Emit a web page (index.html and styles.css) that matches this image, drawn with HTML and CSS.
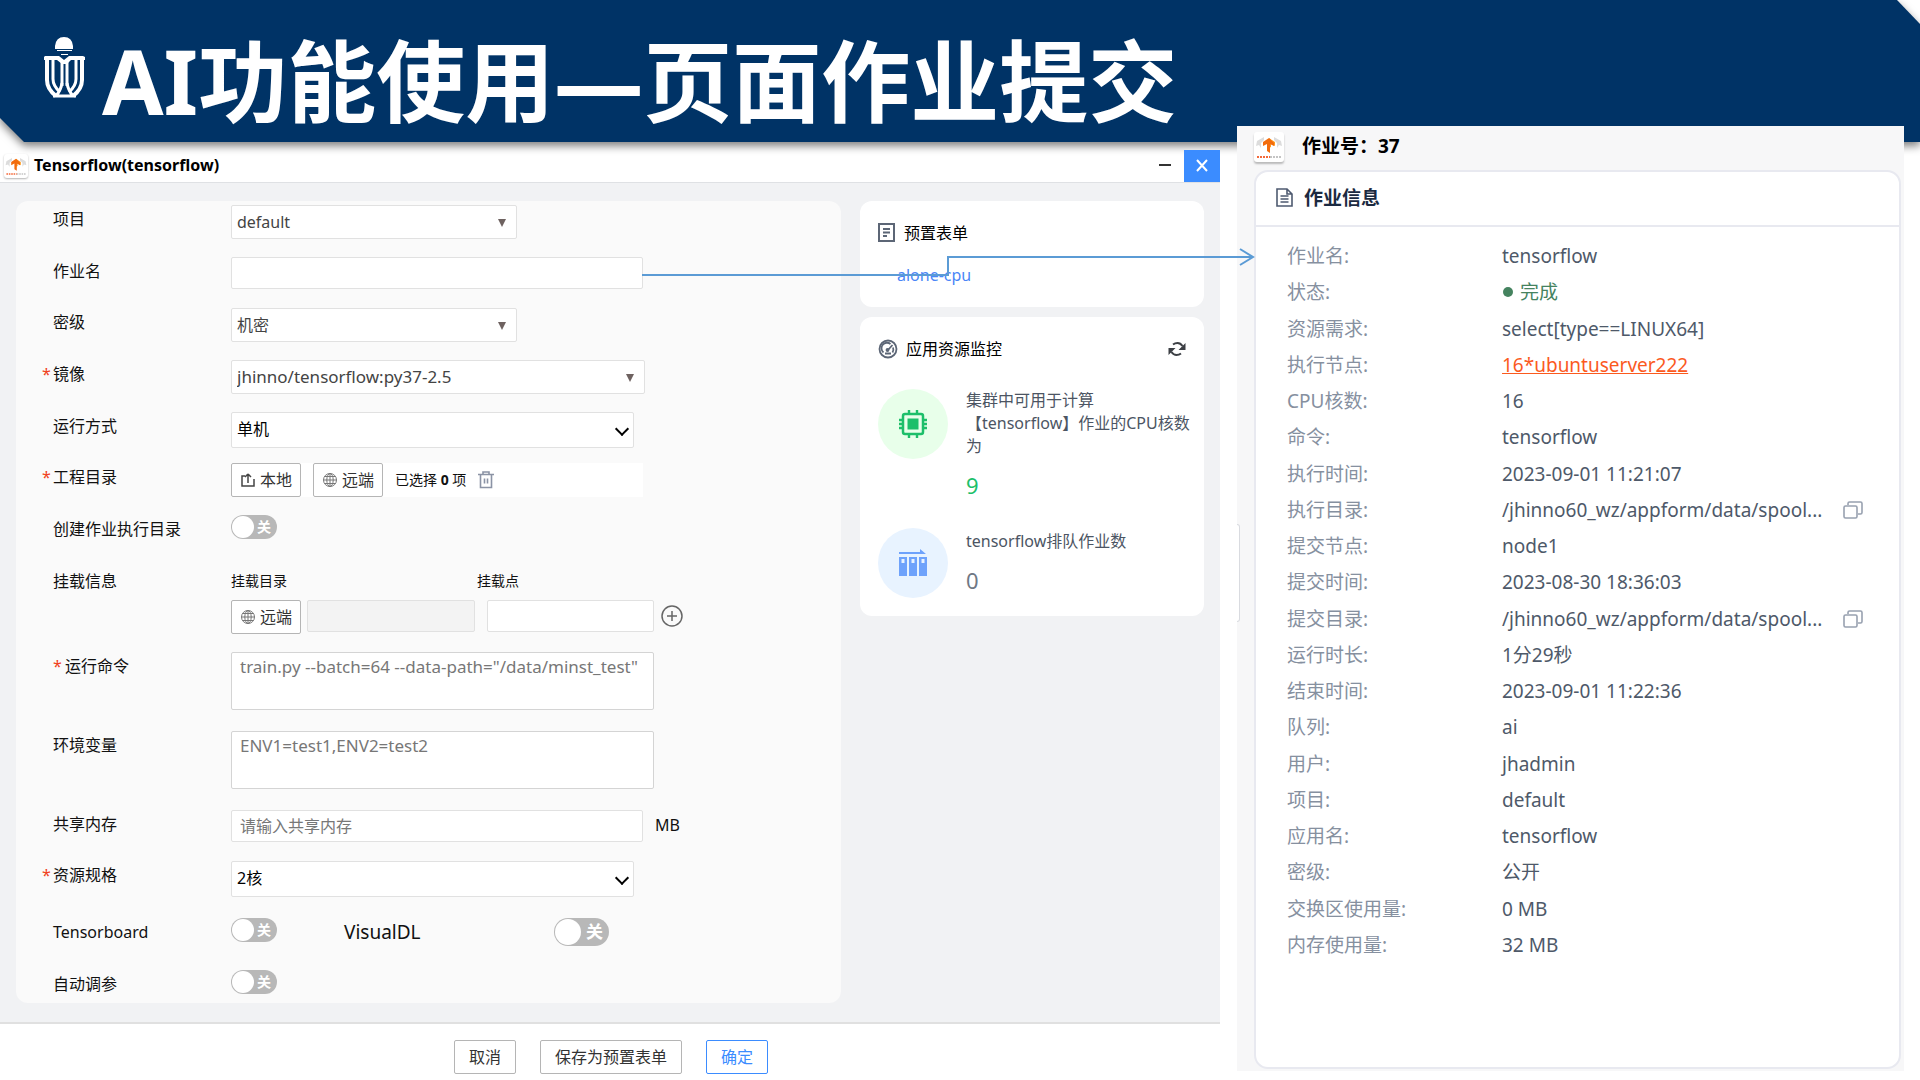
FILE: index.html
```html
<!DOCTYPE html>
<html lang="zh-CN">
<head>
<meta charset="utf-8">
<title>AI功能使用—页面作业提交</title>
<link rel="stylesheet" href="styles.css">
</head>
<body>
<svg class="sprite" aria-hidden="true">
  <symbol id="tf" viewBox="0 0 30 30">
    <path fill="#dcdcdc" d="M3 9l7-4v3l-3 3v5l-2-3-3 1zM27 9l-7-4v3l3 3v5l2-3 3 1z"/>
    <path fill="#ff9a1f" d="M15 6l6 4v4l-4-2v3l-2 1z"/>
    <path fill="#f26b0c" d="M15 6l-6 4v4l4-2v7l3 2v-9l4 2v-3z"/>
    <path stroke="#f4693a" stroke-width="2" stroke-dasharray="2 1" d="M3 25h13"/>
    <path stroke="#c4c4c4" stroke-width="2" stroke-dasharray="2 1" d="M16 25h12"/>
  </symbol>
  <symbol id="globe" viewBox="0 0 16 16">
    <g fill="none" stroke="#777" stroke-width="1"><circle cx="8" cy="8" r="6.500"/><ellipse cx="8" cy="8" rx="3.200" ry="6.500"/><path d="M8 1.500v13M1.500 8h13M2.500 4.500h11M2.500 11.500h11"/></g>
  </symbol>
  <symbol id="copy" viewBox="0 0 20 18">
    <g fill="none" stroke="#98a1b0" stroke-width="1.600"><rect x="1" y="5" width="13" height="12" rx="1.500"/><path d="M5 4V2.500Q5 1 6.500 1H17.500Q19 1 19 2.500V11.500Q19 13 17.500 13H15"/></g>
  </symbol>
</svg>

<header class="banner">
  <div class="banner-bg">
    <svg class="crest" viewBox="0 0 52 74" fill="#fff" aria-hidden="true">
      <path d="M17 19v-3q1-9 9-9t9 9v3zM19 20h15v1H19zM23 24h7v1h-7z"/>
      <path d="M7 26h14l5 4 5-4h14l2 1v3H33l-4 4h-5l-5-4H6v-3z"/>
      <g fill="none" stroke="#fff">
        <path stroke-width="4" d="M9 28v22q0 9 9 16M44 28v22q0 9-9 16"/>
        <path stroke-width="3" d="M15 30v19q0 7 7 13M38 30v19q0 7-7 13M24 32v24M29 32v24"/>
        <path stroke-width="3" d="M24 53q-1 7-6 13M29 53q1 7 6 13M15 66h23"/>
      </g>
    </svg>
    <h1>AI功能使用—页面作业提交</h1>
  </div>
</header>

<main class="stage">
  <section class="window">
    <div class="titlebar">
      <svg class="tf-small"><use href="#tf"/></svg>
      <h2>Tensorflow(tensorflow)</h2>
      <button class="win-btn" type="button" aria-label="最小化"><svg width="12" height="12"><path d="M0 5h12" stroke="#333" stroke-width="2"/></svg></button>
      <button class="win-btn win-close" type="button" aria-label="关闭"><svg width="12" height="14"><path d="M1 1l10 11M11 1L1 12" stroke="#fff" stroke-width="2"/></svg></button>
    </div>

    <div class="workspace">
      <form class="form" id="job">
        <div class="field">
          <label for="project">项目</label>
          <div class="picker picker-short"><select id="project"><option>default</option></select></div>
        </div>
        <div class="field field-tight">
          <label for="jobname">作业名</label>
          <input class="text" id="jobname" type="text">
        </div>
        <div class="field">
          <label for="secret">密级</label>
          <div class="picker picker-short"><select id="secret"><option>机密</option></select></div>
        </div>
        <div class="field">
          <label class="required" for="image">镜像</label>
          <div class="picker picker-long"><select id="image"><option>jhinno/tensorflow:py37-2.5</option></select></div>
        </div>
        <div class="field field-tight">
          <label for="mode">运行方式</label>
          <div class="picker picker-native"><select id="mode"><option>单机</option></select></div>
        </div>
        <div class="field">
          <span class="label required">工程目录</span>
          <div class="files">
            <button class="btn btn-icon" type="button"><svg width="16" height="16" fill="none" stroke="#444" stroke-width="1.500"><path d="M5 4H2v10h12V7M8 11V2M8 2l3 3M8 2L5 5"/></svg>本地</button>
            <button class="btn btn-icon" type="button"><svg width="16" height="16"><use href="#globe"/></svg>远端</button>
            <span class="count">已选择 <b>0</b> 项</span>
            <button class="bare" type="button" aria-label="删除"><svg width="16" height="18" fill="none" stroke="#8b93a5" stroke-width="1.600"><path d="M0 3.500h16M5 3V1h6v2M2.500 4v12.500h11V4M6.500 7.500v5M9.500 7.500v5"/></svg></button>
          </div>
        </div>
        <div class="field">
          <label for="mkdir">创建作业执行目录</label>
          <span class="switch"><input id="mkdir" type="checkbox"><span>关</span></span>
        </div>
        <div class="field">
          <span class="label">挂载信息</span>
          <div class="mount">
            <label for="mdir">挂载目录</label>
            <label for="mpoint">挂载点</label>
            <div class="mount-row">
              <button class="btn btn-icon" type="button"><svg width="16" height="16"><use href="#globe"/></svg>远端</button>
              <input class="text mount-dir" id="mdir" type="text" disabled>
              <input class="text mount-point" id="mpoint" type="text">
              <button class="bare" type="button" aria-label="添加"><svg width="24" height="24" fill="none" stroke="#666" stroke-width="1.500"><circle cx="12" cy="12" r="10"/><path d="M7 12h10M12 7v10"/></svg></button>
            </div>
          </div>
        </div>
        <div class="field field-area">
          <label class="required inset" for="cmd">运行命令</label>
          <textarea id="cmd" placeholder="train.py --batch=64 --data-path=&quot;/data/minst_test&quot;"></textarea>
        </div>
        <div class="field field-area">
          <label for="env">环境变量</label>
          <textarea id="env" placeholder="ENV1=test1,ENV2=test2"></textarea>
        </div>
        <div class="field field-tight">
          <label for="shm">共享内存</label>
          <input class="text padded" id="shm" type="text" placeholder="请输入共享内存">
          <span class="unit">MB</span>
        </div>
        <div class="field field-loose">
          <label class="required" for="spec">资源规格</label>
          <div class="picker picker-native"><select id="spec"><option>2核</option></select></div>
        </div>
        <div class="field">
          <label for="tb">Tensorboard</label>
          <span class="switch"><input id="tb" type="checkbox"><span>关</span></span>
          <label class="vdl" for="vdl">VisualDL</label>
          <span class="switch switch-big"><input id="vdl" type="checkbox"><span>关</span></span>
        </div>
        <div class="field field-last">
          <label for="auto">自动调参</label>
          <span class="switch"><input id="auto" type="checkbox"><span>关</span></span>
        </div>
      </form>

      <aside class="side">
        <section class="card presets">
          <h3><svg width="18" height="20" fill="none" stroke="#5c6676" stroke-width="2"><rect x="1" y="1" width="15" height="17"/><path d="M5 6h7M5 9.500h7M5 13h4"/></svg>预置表单</h3>
          <a href="#job">alone-cpu</a>
        </section>
        <section class="card monitor">
          <h3><svg width="20" height="20" fill="none" stroke="#5c6676" stroke-width="1.800"><circle cx="10" cy="10" r="8.500"/><path d="M5.500 13.500a5.500 5.500 0 0 1 7-8.500M15 8.500q1 2.500-.5 5M10 11l4.500-5M7 14.500h6"/><circle cx="9.500" cy="11" r="1" /></svg>应用资源监控
            <button class="bare" type="button" aria-label="刷新"><svg width="18" height="16" fill="none" stroke="#3c3f44" stroke-width="2"><path d="M5 3.500Q7 2 9.500 2q3 0 5 3M13 12.500Q11 14 8.500 14q-3 0-5-3"/><path fill="#3c3f44" stroke="none" d="M17.500 2v7h-7zM.5 14V7h7z"/></svg></button></h3>
          <div class="stat">
            <div class="disc disc-green"><svg width="28" height="28" fill="none" stroke="#1dbf6a"><rect x="4" y="4" width="20" height="20" rx="2" stroke-width="2.500"/><rect x="8.500" y="8.500" width="11" height="11" fill="#1dbf6a" stroke="none"/><path stroke-width="2.400" d="M10 0v4M18 0v4M10 24v4M18 24v4M0 10h4M0 18h4M24 10h4M24 18h4M0 14h4M24 14h4"/></svg></div>
            <div><p>集群中可用于计算【tensorflow】作业的CPU核数为</p><strong class="green">9</strong></div>
          </div>
          <div class="stat">
            <div class="disc disc-blue"><svg width="28" height="28" fill="#6ea2fb"><path d="M0 3h21V0l6 5H0zM0 8h8v19H0zm2.500 2v4h3v-4zM10 8h8v19h-8zm2.500 2v4h3v-4zM20 8h8v19h-8zm2.500 2v4h3v-4z" fill-rule="evenodd"/></svg></div>
            <div><p>tensorflow排队作业数</p><strong>0</strong></div>
          </div>
        </section>
      </aside>
    </div>

    <div class="footer">
      <button class="btn" type="button">取消</button>
      <button class="btn" type="button">保存为预置表单</button>
      <button class="btn btn-primary" type="submit" form="job">确定</button>
    </div>
  </section>

  <section class="detail">
    <div class="detail-head">
      <svg class="tf-big"><use href="#tf"/></svg>
      <h2>作业号：37</h2>
    </div>
    <div class="detail-card">
      <h3><svg width="18" height="20" fill="none" stroke="#4e5a70" stroke-width="1.600"><path d="M1 1h10l5 5v12H1zM11 1v5h5M4.500 8h8M4.500 11h8M4.500 14h8"/></svg>作业信息</h3>
      <table>
        <tr><th>作业名:</th><td>tensorflow</td></tr>
        <tr><th>状态:</th><td><span class="done">完成</span></td></tr>
        <tr><th>资源需求:</th><td>select[type==LINUX64]</td></tr>
        <tr><th>执行节点:</th><td><a href="#node">16*ubuntuserver222</a></td></tr>
        <tr><th>CPU核数:</th><td>16</td></tr>
        <tr><th>命令:</th><td>tensorflow</td></tr>
        <tr><th>执行时间:</th><td>2023-09-01 11:21:07</td></tr>
        <tr><th>执行目录:</th><td><div class="path"><span>/jhinno60_wz/appform/data/spool...</span><button class="bare" type="button" aria-label="复制"><svg width="20" height="18"><use href="#copy"/></svg></button></div></td></tr>
        <tr><th>提交节点:</th><td>node1</td></tr>
        <tr><th>提交时间:</th><td>2023-08-30 18:36:03</td></tr>
        <tr><th>提交目录:</th><td><div class="path"><span>/jhinno60_wz/appform/data/spool...</span><button class="bare" type="button" aria-label="复制"><svg width="20" height="18"><use href="#copy"/></svg></button></div></td></tr>
        <tr><th>运行时长:</th><td>1分29秒</td></tr>
        <tr><th>结束时间:</th><td>2023-09-01 11:22:36</td></tr>
        <tr><th>队列:</th><td>ai</td></tr>
        <tr><th>用户:</th><td>jhadmin</td></tr>
        <tr><th>项目:</th><td>default</td></tr>
        <tr><th>应用名:</th><td>tensorflow</td></tr>
        <tr><th>密级:</th><td>公开</td></tr>
        <tr><th>交换区使用量:</th><td>0 MB</td></tr>
        <tr><th>内存使用量:</th><td>32 MB</td></tr>
      </table>
    </div>
    <span class="grip"></span>
  </section>

  <svg class="connector" width="614" height="40" fill="none" stroke="#5b9bd5" stroke-width="2" aria-hidden="true"><path d="M0 29h306V11h304M598 3l13 8-13 8"/></svg>
</main>
</body>
</html>
```
FILE: styles.css
```css
* { box-sizing: border-box; }
body {
  margin: 0;
  background: #fff;
  color: #111;
  font: 16px/24px "Noto Sans", "Noto Sans CJK SC", sans-serif;
}
h1, h2, h3, p { margin: 0; }
button, input, select, textarea { font: inherit; color: inherit; }
svg { display: block; flex: none; }
.sprite { position: absolute; width: 0; height: 0; }

/* Banner */
.banner { filter: drop-shadow(0 4px 4px rgba(0, 0, 0, .5)); }
.banner-bg {
  display: flex;
  align-items: center;
  gap: 12px;
  height: 142px;
  padding: 20px 38px 0;
  background: #036;
  clip-path: polygon(0 0, calc(100% - 23px) 0, 100% 24px, 100% 100%, 24px 100%, 0 118px);
}
.crest { width: 52px; height: 74px; margin-bottom: 28px; }
h1 { color: #fff; font-size: 89px; line-height: 112px; font-weight: 700; white-space: nowrap; }

.stage {
  position: relative;
  display: grid;
  grid-template-columns: 1220fr 667fr;
  column-gap: 17px;
  align-items: start;
  padding: 8px 16px 0 0;
}

/* Submit window */
.titlebar {
  display: flex;
  align-items: center;
  height: 33px;
  padding-left: 4px;
  border-bottom: 1px solid #dfe1e4;
}
.tf-small { width: 24px; height: 24px; margin-right: 6px; border-radius: 3px; background: #fff; box-shadow: 0 1px 2px rgba(0, 0, 0, .3); }
.titlebar h2 { flex: 1; padding-bottom: 2px; font-size: 16px; font-weight: 700; color: #000; }
.win-btn { display: grid; place-items: center; width: 38px; height: 32px; padding: 0; border: 0; background: none; }
.win-close { width: 36px; background: #3b8cff; }
.workspace {
  display: grid;
  grid-template-columns: 825fr 344fr;
  column-gap: 19px;
  align-items: start;
  padding: 18px 16px 19px;
  background: #f1f2f4;
}
.form { padding: 4px 0 0 37px; border-radius: 12px; background: #fafafa; }
.field { display: flex; align-items: flex-start; min-height: 52px; }
.field-tight { min-height: 51px; }
.field-loose { min-height: 57px; }
.field-area { min-height: 79px; }
.field-last { min-height: 33px; }
.field > label:first-child, .label { position: relative; flex: none; width: 178px; line-height: 28px; }
.required::before { content: "*"; position: absolute; left: -11px; color: #f04020; }
.field > .required.inset { padding-left: 12px; }
.inset.required::before { left: 0; }

.text, select, textarea { border: 1px solid #e1e1e1; border-radius: 2px; background: #fff; }
.text { width: 412px; height: 32px; padding: 0 6px; }
.text.padded { padding-left: 8px; }
.text:disabled { background: #f3f3f3; }
.picker { position: relative; }
.picker select { appearance: none; width: 100%; height: 34px; padding: 0 5px; color: #444; }
.picker::after {
  content: "";
  position: absolute;
  right: 11px;
  top: 14px;
  border: 4px solid transparent;
  border-top: 8px solid #6e6260;
  border-bottom: 0;
  pointer-events: none;
}
.picker-short { width: 286px; }
.picker-long { width: 414px; }
.picker-native { width: 403px; }
.picker-native select { height: 36px; padding-bottom: 2px; color: #000; }
.picker-native::after {
  right: 7px;
  top: 12px;
  width: 8px;
  height: 8px;
  border: solid #000;
  border-width: 0 2px 2px 0;
  transform: rotate(45deg);
}
.picker-long select { font-size: 17px; }
textarea { display: block; width: 423px; height: 58px; padding: 2px 8px; border-color: #d4d4d4; font-size: 17px; resize: none; overflow: hidden; }
::placeholder { color: #777; opacity: 1; }
.unit { margin-left: 12px; line-height: 30px; }

.btn { height: 34px; padding: 0 14px; border: 1px solid #b5b5b5; border-radius: 2px; background: #fff; color: #333; line-height: 30px; white-space: nowrap; }
.btn-icon { display: flex; align-items: center; gap: 4px; width: 70px; padding: 0 8px; }
.btn-primary { border-color: #3b8cff; color: #3b8cff; }
.bare { display: block; padding: 0; border: 0; background: none; }
.files { display: flex; align-items: center; gap: 12px; width: 412px; background: #fff; }
.count { font-size: 14px; }

.switch {
  position: relative;
  width: 46px;
  height: 24px;
  border-radius: 12px;
  background: #b8b8b8;
  color: #fff;
  font-size: 14px;
  font-weight: 700;
  line-height: 24px;
  text-align: right;
  padding-right: 6px;
}
.switch::before { content: ""; position: absolute; left: 1px; top: 1px; width: 22px; height: 22px; border-radius: 50%; background: #fff; }
.switch input { position: absolute; inset: 0; width: 100%; height: 100%; margin: 0; opacity: 0; }
.switch-big { width: 55px; height: 28px; border-radius: 14px; font-size: 17px; line-height: 28px; }
.switch-big::before { width: 26px; height: 26px; }
.vdl { width: 210px; margin-left: 67px; font-size: 19px; line-height: 28px; }

.mount { display: grid; grid-template-columns: 246px auto; row-gap: 5px; padding-bottom: 18px; }
.mount label { font-size: 14px; line-height: 28px; }
.mount-row { grid-column: 1 / 3; display: flex; align-items: flex-start; gap: 6px; }
.mount-row .bare { padding-top: 4px; }
.mount .mount-dir { width: 168px; }
.mount .mount-point { width: 167px; margin-left: 6px; }

/* Side cards */
.side { display: grid; gap: 10px; }
.card { border-radius: 12px; background: #fff; padding: 20px 18px; }
.card h3 { display: flex; align-items: center; gap: 8px; font-size: 16px; font-weight: 400; color: #000; }
.card h3 .bare { margin-left: auto; }
.presets { min-height: 105px; }
.presets a { display: inline-block; margin: 18px 0 0 19px; color: #4a86f7; text-decoration: none; }
.monitor { min-height: 299px; padding-right: 10px; padding-bottom: 18px; }
.monitor h3 { padding-right: 8px; }
.stat { display: grid; grid-template-columns: 70px 1fr; column-gap: 18px; min-height: 139px; padding-top: 28px; color: #4c5563; line-height: 23px; }
.stat + .stat { min-height: 70px; }
.stat + .stat p { padding-top: 2px; }
.disc { display: grid; place-items: center; width: 70px; height: 70px; border-radius: 50%; }
.disc-green { background: #e8ffea; }
.disc-blue { background: #e8f3ff; }
.stat strong { display: block; padding-top: 16px; font-size: 22px; font-weight: 400; color: #6f7885; }
.stat strong.green { color: #1dbf6a; }

.footer { display: flex; gap: 24px; padding: 16px 0 7px 454px; border-top: 2px solid #e0e0e0; background: #fff; }

/* Job details */
.detail { position: relative; margin-top: -24px; padding: 6px 3px 2px 17px; background: #f7f7f8; }
.detail-head { display: flex; align-items: flex-start; gap: 18px; height: 38px; }
.tf-big { width: 30px; height: 30px; border-radius: 3px; background: #fff; box-shadow: 0 2px 2px rgba(0, 0, 0, .25); }
.detail h2 { font-size: 19px; line-height: 28px; font-weight: 700; color: #000; }
.detail-card { min-height: 899px; border: 2px solid #e8e9f0; border-radius: 14px; background: #fff; }
.detail .detail-card h3 { display: flex; align-items: center; gap: 10px; height: 55px; padding: 0 0 2px 20px; border-bottom: 2px solid #e8e9f0; font-size: 19px; font-weight: 700; color: #1b2a41; }
table { width: 100%; height: 725px; margin-top: 11px; border-collapse: collapse; font-size: 19px; }
th, td { padding: 0; text-align: left; font-weight: 400; white-space: nowrap; }
th { width: 246px; padding-left: 31px; color: #86909f; }
td { color: #4e5969; }
td a { color: #fb5a1e; }
.done { display: flex; align-items: center; gap: 7px; color: #45835f; }
.done::before { content: ""; width: 10px; height: 10px; margin-left: 1px; border-radius: 50%; background: #45835f; }
.path { display: flex; align-items: center; justify-content: space-between; padding-right: 36px; }
.grip { position: absolute; left: 0; top: 398px; width: 3px; height: 98px; border: 1px solid #d9dbe0; border-left: 0; border-radius: 0 3px 3px 0; background: #fff; }

/* Arrow from the job name field to its detail row */
.connector { position: absolute; left: calc(33.500% - 1px); top: 104px; pointer-events: none; }
```
